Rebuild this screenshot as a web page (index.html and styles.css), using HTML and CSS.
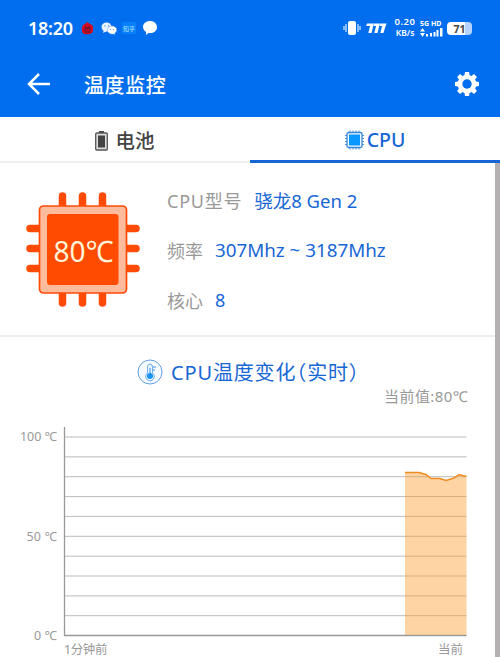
FILE: index.html
```html
<!DOCTYPE html>
<html lang="zh-CN">
<head>
<meta charset="utf-8">
<title>温度监控</title>
<link rel="stylesheet" href="styles.css">
</head>
<body>
<header class="header">
  <div class="status">
    <span class="clock">18:20</span>
    <svg class="notices" width="78" height="18" viewBox="0 0 78 18">
      <path d="M1 12Q0 6 4 5L6 3L9 5Q13 6 12 12Q10 16 6 15Q2 16 1 12Z" fill="#d80920"/>
      <path d="M3.500 12L5 8L6.500 10L8 8L9.500 12M4 13H9" fill="none" stroke="#741432" stroke-width="1.4"/>
      <ellipse cx="25.500" cy="8" rx="5" ry="4.500" fill="#e8f4ff"/>
      <ellipse cx="31" cy="11" rx="4.700" ry="4" fill="#fff" stroke="#609fed" stroke-width=".5"/>
      <path d="M23 11L22 14L26 12M33 13L34 15.500L30 14.500" fill="#e8f4ff"/>
      <g fill="#408be5"><circle cx="24" cy="7" r=".7"/><circle cx="27.500" cy="7" r=".7"/><circle cx="29.500" cy="10.500" r=".6"/><circle cx="32.500" cy="10.500" r=".6"/></g>
      <rect x="41" y="3" width="14" height="12" rx="2" fill="#0780fa"/>
      <text class="zhihu" x="42" y="11.500" textLength="12">知乎</text>
      <path d="M69 2C73.200 2 76 4.700 76 8.200S73 14 69 14L67.500 14L65 16L65 13C59.500 9 62 2 69 2Z" fill="#fff"/>
    </svg>
    <svg class="vibrate" width="18" height="16" viewBox="0 0 18 16">
      <rect x="5" y="1" width="8" height="14" rx="2" fill="#fff"/>
      <path d="M3 4V12M1 6V10M15 4V12M17 6V10" stroke="#b9dcff" stroke-width="1.400"/>
    </svg>
    <svg class="speed-mark" width="21" height="12" viewBox="0 0 21 12">
      <path d="M1 1.500H20.500L19.800 4H.2ZM4.300 3H7.500L5.500 11H2.300ZM10.300 3H13.500L11.500 11H8.300ZM16.300 3H19.900L17.500 11H14.300Z" fill="#fff"/>
      <path d="M8 1L7.300 4M14 1L13.300 4" stroke="#4b9aff" stroke-width=".6"/>
    </svg>
    <div class="rate"><span class="amount">0.20</span><span>KB/s</span></div>
    <div class="network">
      <span>5G HD</span>
      <svg width="23" height="9" viewBox="0 0 23 9" fill="#fff"><path d="M2.500 0L5 3.500H0ZM2.500 9L0 5H5ZM6 6H8V8.500H6ZM10 5H12V8.500H10ZM13.500 4H15.500V8.500H13.500ZM16.500 2H18.500V8.500H16.500ZM20 0H22.500V8.500H20Z"/></svg>
    </div>
    <div class="charge"><span>71</span></div>
  </div>
  <div class="appbar">
    <svg width="24" height="24" viewBox="0 0 24 24" fill="none" stroke="#fff" stroke-width="2.500"><path d="M23 12H2.500M12 2L2 12L12 22"/></svg>
    <h1>温度监控</h1>
    <svg class="gear" width="26" height="26" viewBox="-13 -13 26 26">
      <g fill="#fff"><path id="tooth" d="M-2.700 -8L-2 -12H2L2.700 -8V8L2 12H-2L-2.700 8Z"/><use href="#tooth" transform="rotate(45)"/><use href="#tooth" transform="rotate(90)"/><use href="#tooth" transform="rotate(135)"/><circle r="9.300"/></g><circle r="4.700" fill="#006eee"/>
    </svg>
  </div>
</header>
<nav class="tabs">
  <a class="tab">
    <svg width="13" height="20" viewBox="0 0 13 20"><path d="M4 0H9V2H4Z" fill="#444"/><rect x=".7" y="2" width="11.600" height="17" rx="1" fill="#ddd" stroke="#555" stroke-width="1.300"/><rect x="3" y="4.500" width="7" height="12" fill="#444"/></svg>
    <span>电池</span>
  </a>
  <a class="tab active">
    <svg width="19" height="20" viewBox="0 0 19 20"><path d="M5 .5V19.500M8 .5V19.500M11 .5V19.500M14 .5V19.500M0 5.500H19M0 8.500H19M0 11.500H19M0 14.500H19" stroke="#4c94dc" stroke-width="1"/><rect x="2" y="2.500" width="15" height="15" rx="1.500" fill="#eff8ff" stroke="#3686dc" stroke-width="1.300"/><rect x="4" y="4.500" width="11" height="11" fill="#0898ff"/></svg>
    <span>CPU</span>
  </a>
</nav>
<main class="content">
  <section class="info">
    <svg class="chip" width="114" height="115" viewBox="0 0 114 115">
      <path d="M36.500 4V111M56.500 4V111M76.500 4V111M4 36.500H110M4 56.500H110M4 76.500H110" stroke="#ff4b05" stroke-width="7.500" stroke-linecap="round"/>
      <rect x="13.500" y="14" width="87" height="87" rx="4" fill="#ffbc9c" stroke="#ff4b05" stroke-width="1.700"/>
      <rect x="21" y="22" width="71.500" height="71" rx="3" fill="#ff4b00"/>
      <text x="27.500" y="69.500" textLength="60" lengthAdjust="spacingAndGlyphs">80℃</text>
    </svg>
    <dl class="specs">
      <div><dt class="model">CPU型号</dt><dd class="model-name">骁龙8 Gen 2</dd></div>
      <div><dt>频率</dt><dd class="frequency">307Mhz ~ 3187Mhz</dd></div>
      <div><dt>核心</dt><dd>8</dd></div>
    </dl>
  </section>
  <section class="history">
    <h2>
      <svg width="26" height="26" viewBox="0 0 26 26"><circle cx="13" cy="13" r="12" fill="#f4faff" stroke="#619de0"/><path d="M10.500 14V8Q10.500 5 13 5T15.500 8V14A4.300 4.300 0 1 1 10.500 14Z" fill="#e6f4ff" stroke="#73aee9"/><path d="M13 9V16M16 8H19M16 11H18" stroke="#3b91e4" stroke-width="1"/><circle cx="13" cy="17" r="3" fill="#1692f6"/></svg>
      <span>CPU温度变化（实时）</span>
    </h2>
    <p class="current">当前值:80℃</p>
    <svg class="chart" width="495" height="250" viewBox="0 0 495 250">
      <path class="grid" d="M64.500 30H466.500M64.500 49.900H466.500M64.500 69.700H466.500M64.500 89.600H466.500M64.500 109.400H466.500M64.500 129.300H466.500M64.500 149.200H466.500M64.500 169H466.500M64.500 188.900H466.500M64.500 208.700H466.500"/>
      <path class="axis" d="M64.500 20V228.500H466.500"/>
      <path class="area" d="M405 65.500H419L426 67.500L431 71.500H440L446 73.500L454 71L459 67.500L466.500 69.500V228H405Z"/>
      <path class="line" d="M405 65.500H419L426 67.500L431 71.500H440L446 73.500L454 71L459 67.500L466.500 69.500"/>
      <g class="labels">
        <text x="20" y="34" textLength="37">100 ℃</text>
        <text x="26.500" y="133.500" textLength="30.500">50 ℃</text>
        <text x="34" y="233" textLength="23">0 ℃</text>
        <text x="64" y="246.500" textLength="43.500">1分钟前</text>
        <text x="438" y="246.500" textLength="25">当前</text>
      </g>
    </svg>
  </section>
</main>
</body>
</html>
```
FILE: styles.css
```css
* { box-sizing: border-box; }
body {
  margin: 0;
  height: 657px;
  overflow: hidden;
  background: #fff;
  font-family: "Noto Sans", "Noto Sans CJK SC", sans-serif;
}
svg { flex: none; }
h1, h2, p, dl, dd { margin: 0; font-weight: 400; }
.header { height: 117px; background: #006eee; color: #fff; }
.status { display: flex; align-items: center; height: 55px; padding: 0 28px; }
.clock { width: 46px; font-size: 18px; font-weight: 600; letter-spacing: -.3px; }
.notices { margin-left: 7px; }
.zhihu { font-size: 6px; fill: #b4e3ff; }
.vibrate { margin-left: 184px; }
.speed-mark { margin-left: 5px; }
.rate { display: grid; grid-template-rows: 11px 10px; width: 24px; margin-left: 6px; font-size: 8.5px; font-weight: 600; line-height: 10px; text-align: center; }
.rate .amount { font-size: 9.5px; line-height: 10px; letter-spacing: .5px; }
.network { display: flex; flex-direction: column; align-items: flex-start; width: 23px; margin-left: 3px; font-size: 7px; font-weight: 700; line-height: 9px; white-space: nowrap; }
.charge { display: flex; align-items: center; justify-content: center; width: 25px; height: 13px; margin: 2px 0 0 4px; border-radius: 4px; background: linear-gradient(90deg, #fff 72%, #b6d4ff 72%); color: #444; font-size: 10.5px; font-weight: 700; }
.appbar { display: flex; align-items: center; height: 57px; padding: 0 20px 0 27px; }
.appbar h1 { margin: 1px 0 0 33px; font-size: 20px; font-weight: 500; letter-spacing: .6px; }
.gear { margin-left: auto; }
.tabs { display: grid; grid-template-columns: 1fr 1fr; height: 46px; }
.tab { display: flex; align-items: center; justify-content: center; gap: 7px; padding-top: 3px; border-bottom: 2px solid #efefef; color: #444; font-size: 19.5px; font-weight: 500; line-height: 26px; }
.tab.active { gap: 3px; border-bottom: 3px solid #1766d5; color: #1766d5; font-size: 19.5px; }
.content { height: 494px; border-right: 5px solid #b5b1b2; }
.info { display: flex; height: 174px; padding: 29px 0 0 26px; border-bottom: 2px solid #eee; }
.chip text { font-size: 29.5px; fill: #fff4d9; }
.specs { margin: -17px 0 0 27px; font-size: 18px; }
.specs div { display: flex; align-items: center; gap: 12px; height: 50px; white-space: nowrap; }
.specs dt { color: #999; }
.specs .model { letter-spacing: .75px; }
.specs dd { color: #1766d5; }
.specs .model-name { font-size: 18.5px; margin-top: -1px; }
.specs .frequency { font-size: 18.8px; }
.history h2 { display: flex; align-items: center; gap: 8px; height: 28px; margin: 21px 0 0 137px; color: #1766d5; font-size: 20px; line-height: 28px; white-space: nowrap; }
.history h2 span { margin-top: 2px; font-feature-settings: "halt"; letter-spacing: .85px; }
.current { height: 22px; margin: -1px 27px 0 0; color: #999; font-size: 15px; line-height: 22px; letter-spacing: .4px; text-align: right; }
.chart { display: block; }
.grid { stroke: #bbb; stroke-width: 1; }
.axis { fill: none; stroke: #999; stroke-width: 1.3; }
.area { fill: #ff9b2d; fill-opacity: .43; }
.line { fill: none; stroke: #ee8d20; stroke-width: 1.5; }
.labels { fill: #999; font-size: 12.5px; }
```
